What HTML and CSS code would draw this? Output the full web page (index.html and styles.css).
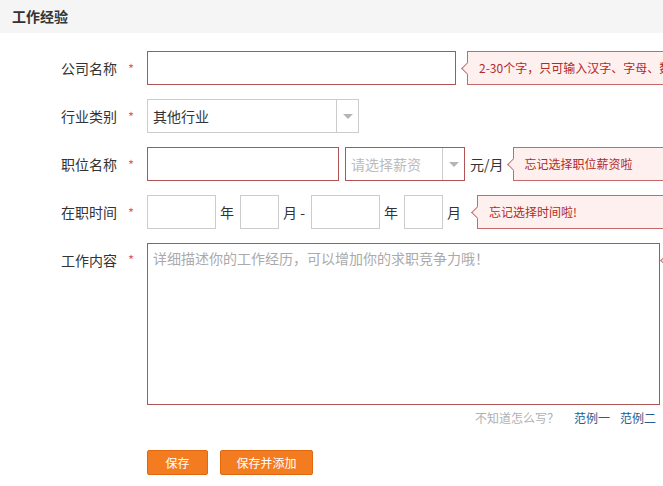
FILE: index.html
```html
<!DOCTYPE html>
<html lang="zh-CN">
<head>
    <meta charset="UTF-8">
    <title>工作经验</title>
    <link rel="stylesheet" href="styles.css">
</head>
<body>
    <div class="section-title">工作经验</div>

    <div class="form">
        <div class="row">
            <label class="label">公司名称</label>
            <span class="star">*</span>
            <input class="input input-error w-company" type="text">
            <div class="tip">2-30个字，只可输入汉字、字母、数字和常见符号</div>
        </div>

        <div class="row">
            <label class="label">行业类别</label>
            <span class="star">*</span>
            <div class="select w-industry">
                <span class="select-text">其他行业</span>
                <span class="select-arrow"></span>
            </div>
        </div>

        <div class="row">
            <label class="label">职位名称</label>
            <span class="star">*</span>
            <input class="input input-error w-position" type="text">
            <div class="select select-error w-salary">
                <span class="select-text placeholder">请选择薪资</span>
                <span class="select-arrow"></span>
            </div>
            <span class="unit">元/月</span>
            <div class="tip tip-short">忘记选择职位薪资啦</div>
        </div>

        <div class="row">
            <label class="label">在职时间</label>
            <span class="star">*</span>
            <input class="input w-year" type="text">
            <span class="unit">年</span>
            <input class="input w-month" type="text">
            <span class="unit">月 -</span>
            <input class="input w-year" type="text">
            <span class="unit">年</span>
            <input class="input w-month" type="text">
            <span class="unit">月</span>
            <div class="tip tip-time">忘记选择时间啦!</div>
        </div>

        <div class="row row-top">
            <label class="label">工作内容</label>
            <span class="star">*</span>
            <textarea class="textarea" placeholder="详细描述你的工作经历，可以增加你的求职竞争力哦！"></textarea>
            <div class="tip tip-area">请填写工作内容</div>
        </div>

        <div class="hint">
            <span class="hint-text">不知道怎么写？</span>
            <a class="hint-link" href="#">范例一</a>
            <a class="hint-link" href="#">范例二</a>
        </div>

        <div class="actions">
            <button class="btn btn-save">保存</button>
            <button class="btn btn-add">保存并添加</button>
        </div>
    </div>
</body>
</html>
```

FILE: styles.css
```css
* {
    margin: 0;
    padding: 0;
    box-sizing: border-box;
}

body {
    font-family: "Noto Sans CJK SC", "Liberation Sans", sans-serif;
    font-size: 14px;
    color: #333;
    background: #fff;
    width: 663px;
    overflow: hidden;
}

.section-title {
    height: 33px;
    line-height: 33px;
    padding-left: 12px;
    background: #f5f5f5;
    font-weight: bold;
    font-size: 14px;
    color: #333;
}

.form {
    padding-top: 18px;
}

.row {
    display: flex;
    align-items: center;
    height: 34px;
    margin-bottom: 14px;
    white-space: nowrap;
}

.row-top {
    align-items: flex-start;
    height: 162px;
    margin-bottom: 0;
}

.row-top .label,
.row-top .star {
    line-height: 34px;
}

.label {
    width: 117px;
    flex-shrink: 0;
    text-align: right;
    color: #333;
}

.star {
    width: 30px;
    flex-shrink: 0;
    padding-left: 11px;
    color: #e06060;
    font-size: 13px;
}

.input {
    height: 34px;
    border: 1px solid #ccc;
    background: #fff;
    flex-shrink: 0;
    outline: none;
}

.input-error {
    border-color: #b05555;
}

.w-company { width: 309px; }
.w-position { width: 192px; }
.w-year { width: 69px; }
.w-month { width: 39px; }

.select {
    display: flex;
    height: 34px;
    border: 1px solid #ccc;
    background: #fff;
    flex-shrink: 0;
}

.select-error {
    border-color: #b05555;
    margin-left: 6px;
}

.w-industry { width: 212px; }
.w-salary { width: 120px; }

.select-text {
    flex: 1;
    line-height: 32px;
    padding-left: 5px;
    color: #333;
}

.placeholder {
    color: #bbb;
}

.select-arrow {
    width: 22px;
    border-left: 1px solid #ccc;
    display: flex;
    align-items: center;
    justify-content: center;
}

.select-arrow::after {
    content: "";
    border-left: 5px solid transparent;
    border-right: 5px solid transparent;
    border-top: 5px solid #b5b5b5;
}

.unit {
    margin: 0 6px 0 4px;
    color: #333;
}

.select + .unit {
    margin-left: 5px;
}

.tip {
    position: relative;
    flex-shrink: 0;
    height: 34px;
    line-height: 32px;
    margin-left: 11px;
    padding: 0 40px 0 11px;
    border: 1px solid #c46a6a;
    background: #fdf0ef;
    color: #b22a2a;
    font-size: 12px;
}

.tip::before {
    content: "";
    position: absolute;
    left: -5px;
    top: 12px;
    width: 8px;
    height: 8px;
    background: #fdf0ef;
    border-left: 1px solid #c46a6a;
    border-bottom: 1px solid #c46a6a;
    transform: rotate(45deg);
}

.tip-short {
    margin-left: 3px;
}

.tip-time {
    margin-left: 10px;
    padding-right: 120px;
}

.tip-area {
    margin-left: 6px;
}

.textarea {
    width: 513px;
    height: 162px;
    flex-shrink: 0;
    border: 1px solid #b05555;
    padding: 4px 5px;
    font-family: "Noto Sans CJK SC", "Liberation Sans", sans-serif;
    font-size: 14px;
    color: #333;
    resize: none;
    outline: none;
}

.textarea::placeholder {
    color: #aaa;
}

.hint {
    display: flex;
    justify-content: flex-end;
    gap: 10px;
    width: 656px;
    margin-top: 5px;
    font-size: 12px;
    line-height: 16px;
}

.hint-text {
    color: #b0b0b0;
    margin-right: 5px;
}

.hint-link {
    color: #2a5b8c;
    text-decoration: none;
}

.actions {
    display: flex;
    gap: 12px;
    padding-left: 147px;
    margin-top: 24px;
}

.btn {
    height: 25px;
    border: 1px solid #e0690f;
    border-radius: 2px;
    background: #f47c20;
    color: #fff;
    font-family: "Noto Sans CJK SC", "Liberation Sans", sans-serif;
    font-size: 12px;
    cursor: pointer;
}

.btn-save { width: 61px; }
.btn-add { width: 93px; }
```
